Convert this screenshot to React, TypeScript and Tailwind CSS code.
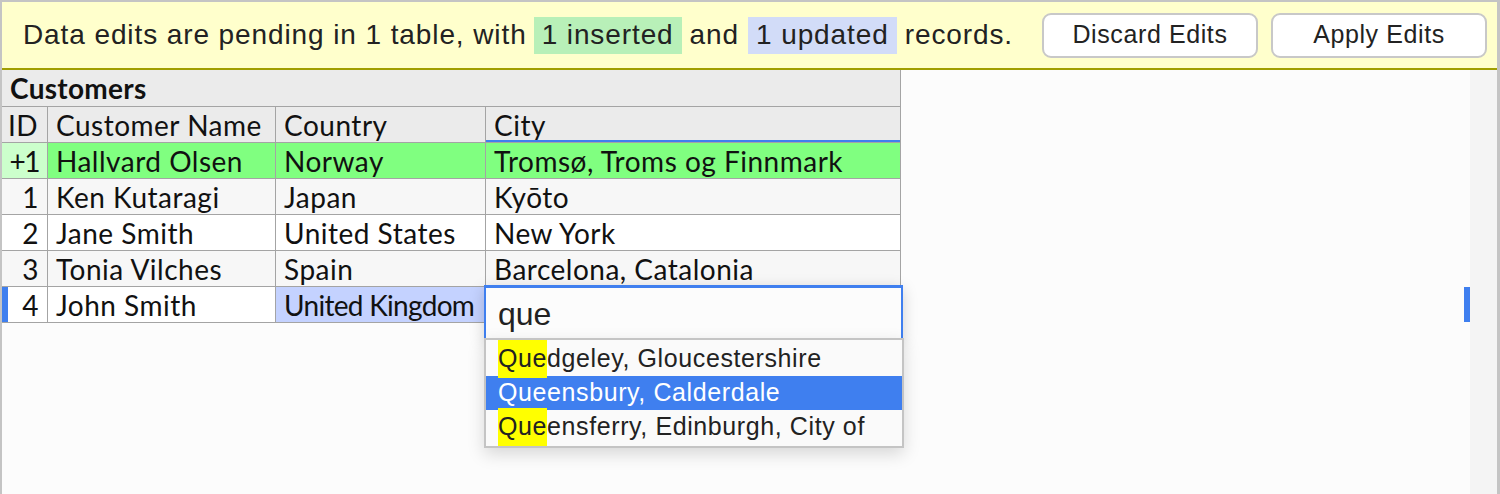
import React from 'react';

const rows = [
  { id: '1', name: 'Ken Kutaragi', country: 'Japan', city: 'Kyōto', bg: 'bg-[#f7f7f7]' },
  { id: '2', name: 'Jane Smith', country: 'United States', city: 'New York', bg: 'bg-white' },
  { id: '3', name: 'Tonia Vilches', country: 'Spain', city: 'Barcelona, Catalonia', bg: 'bg-[#f7f7f7]' },
];

const suggestions = [
  { rest: 'dgeley, Gloucestershire', active: false },
  { rest: 'ensbury, Calderdale', active: true },
  { rest: 'ensferry, Edinburgh, City of', active: false },
];

const cell = 'h-full flex items-center border-r border-[#a4a4a4] whitespace-nowrap overflow-hidden';
const text = `${cell} px-[8px]`;
const idCell = `${cell} w-[46px] justify-end pr-[8px]`;

export default function App() {
  return (
    <div className="relative w-[1500px] h-[494px] overflow-hidden bg-[#fcfcfc] border-t-2 border-l-2 border-r-[3px] border-[#c4c4c4] flex flex-col">
      {/* Pending edits banner */}
      <div className="h-[68px] shrink-0 bg-[#ffffcc] border-b-2 border-[#a09e00] flex items-center pl-[21px] pr-[10px] font-['Liberation_Sans',Arial,sans-serif] text-[#222]">
        <div className="text-[28px] tracking-[0.9px] flex items-center whitespace-nowrap">
          <span>Data edits are pending in 1 table, with</span>
          <span className="ml-[7px] bg-[#b8f0b8] px-[8px] h-[37px] flex items-center">1 inserted</span>
          <span className="ml-[8px]">and</span>
          <span className="ml-[9px] bg-[#d2dcf8] px-[8px] h-[37px] flex items-center">1 updated</span>
          <span className="ml-[8px]">records.</span>
        </div>
        <div className="ml-auto flex gap-[13px]">
          <button className="w-[216px] h-[45px] bg-white rounded-[9px] border-2 border-[#c8c8c8] text-[25px] tracking-[0.6px] text-[#222]">Discard Edits</button>
          <button className="w-[216px] h-[45px] bg-white rounded-[9px] border-2 border-[#c8c8c8] text-[25px] tracking-[0.6px] text-[#222]">Apply Edits</button>
        </div>
      </div>

      <div className="flex flex-1">
        {/* Table */}
        <div className="flex-1 font-['Lato','Noto_Sans',sans-serif] text-[28px] tracking-[0.5px] text-[#111]">
          <div className="w-[899px]">
            <div className="h-[37px] bg-[#ebebeb] border-b border-r border-[#a4a4a4] flex items-center px-[8px] font-bold tracking-[0.3px]">Customers</div>
            <div className="h-[36px] bg-[#ebebeb] flex border-b border-[#a4a4a4]">
              <div className={`${cell} w-[46px] pl-[6px]`}>ID</div>
              <div className={`${text} w-[228px]`}>Customer Name</div>
              <div className={`${text} w-[210px]`}>Country</div>
              <div className={`${text} w-[415px] relative`}>
                City
                <div className="absolute left-0 right-0 bottom-[-1px] h-[3px] bg-[#3f7fef]" />
              </div>
            </div>
            <div className="h-[36px] bg-[#80ff80] flex border-b border-[#a4a4a4]">
              <div className={`${idCell} bg-[#ccffcc] tracking-[-1.5px]`}>+1</div>
              <div className={`${text} w-[228px]`}>Hallvard Olsen</div>
              <div className={`${text} w-[210px]`}>Norway</div>
              <div className={`${text} w-[415px]`}>Tromsø, Troms og Finnmark</div>
            </div>
            {rows.map((r) => (
              <div key={r.id} className={`h-[36px] ${r.bg} flex border-b border-[#a4a4a4]`}>
                <div className={idCell}>{r.id}</div>
                <div className={`${text} w-[228px]`}>{r.name}</div>
                <div className={`${text} w-[210px]`}>{r.country}</div>
                <div className={`${text} w-[415px]`}>{r.city}</div>
              </div>
            ))}
            <div className="h-[36px] bg-white flex border-b border-[#a4a4a4] relative">
              <div className="absolute left-0 top-0 bottom-0 w-[6px] bg-[#3f7fef]" />
              <div className={idCell}>4</div>
              <div className={`${text} w-[228px]`}>John Smith</div>
              <div className={`${cell} w-[210px] pl-[8px] tracking-[-0.7px] bg-[#c4d2ff]`}>United Kingdom</div>
              <div className={`${text} w-[415px]`}></div>
            </div>
          </div>
        </div>

        {/* Scrollbar track */}
        <div className="w-[27px] bg-[#f4f4f4] relative">
          <div className="absolute left-[-6px] top-[217px] w-[6px] h-[35px] bg-[#3f7fef]" />
        </div>
      </div>

      {/* Cell editor */}
      <div className="absolute left-[482px] top-[283px] w-[419px] h-[55px] bg-[#fcfcfc] border-t-[3px] border-l-2 border-r-2 border-[#3f7fef] shadow-[0_4px_14px_rgba(0,0,0,0.18)] flex items-center pl-[12px] font-['Liberation_Sans',Arial,sans-serif] text-[32px] text-[#222]">
        que
      </div>

      {/* Autocomplete list */}
      <div className="absolute left-[482px] top-[336px] w-[420px] bg-[#fafafa] border-2 border-[#c4c4c4] shadow-[0_6px_16px_rgba(0,0,0,0.15)] py-[2px] font-['Liberation_Sans',Arial,sans-serif] text-[25px] tracking-[0.6px]">
        {suggestions.map((s) => (
          <div
            key={s.rest}
            className={`h-[34px] flex items-center pl-[12px] whitespace-nowrap ${s.active ? 'bg-[#3f7fef] text-white' : 'text-[#222]'}`}
          >
            <span className={s.active ? '' : 'bg-[#ffff00]'}>Que</span>
            <span>{s.rest}</span>
          </div>
        ))}
      </div>
    </div>
  );
}
